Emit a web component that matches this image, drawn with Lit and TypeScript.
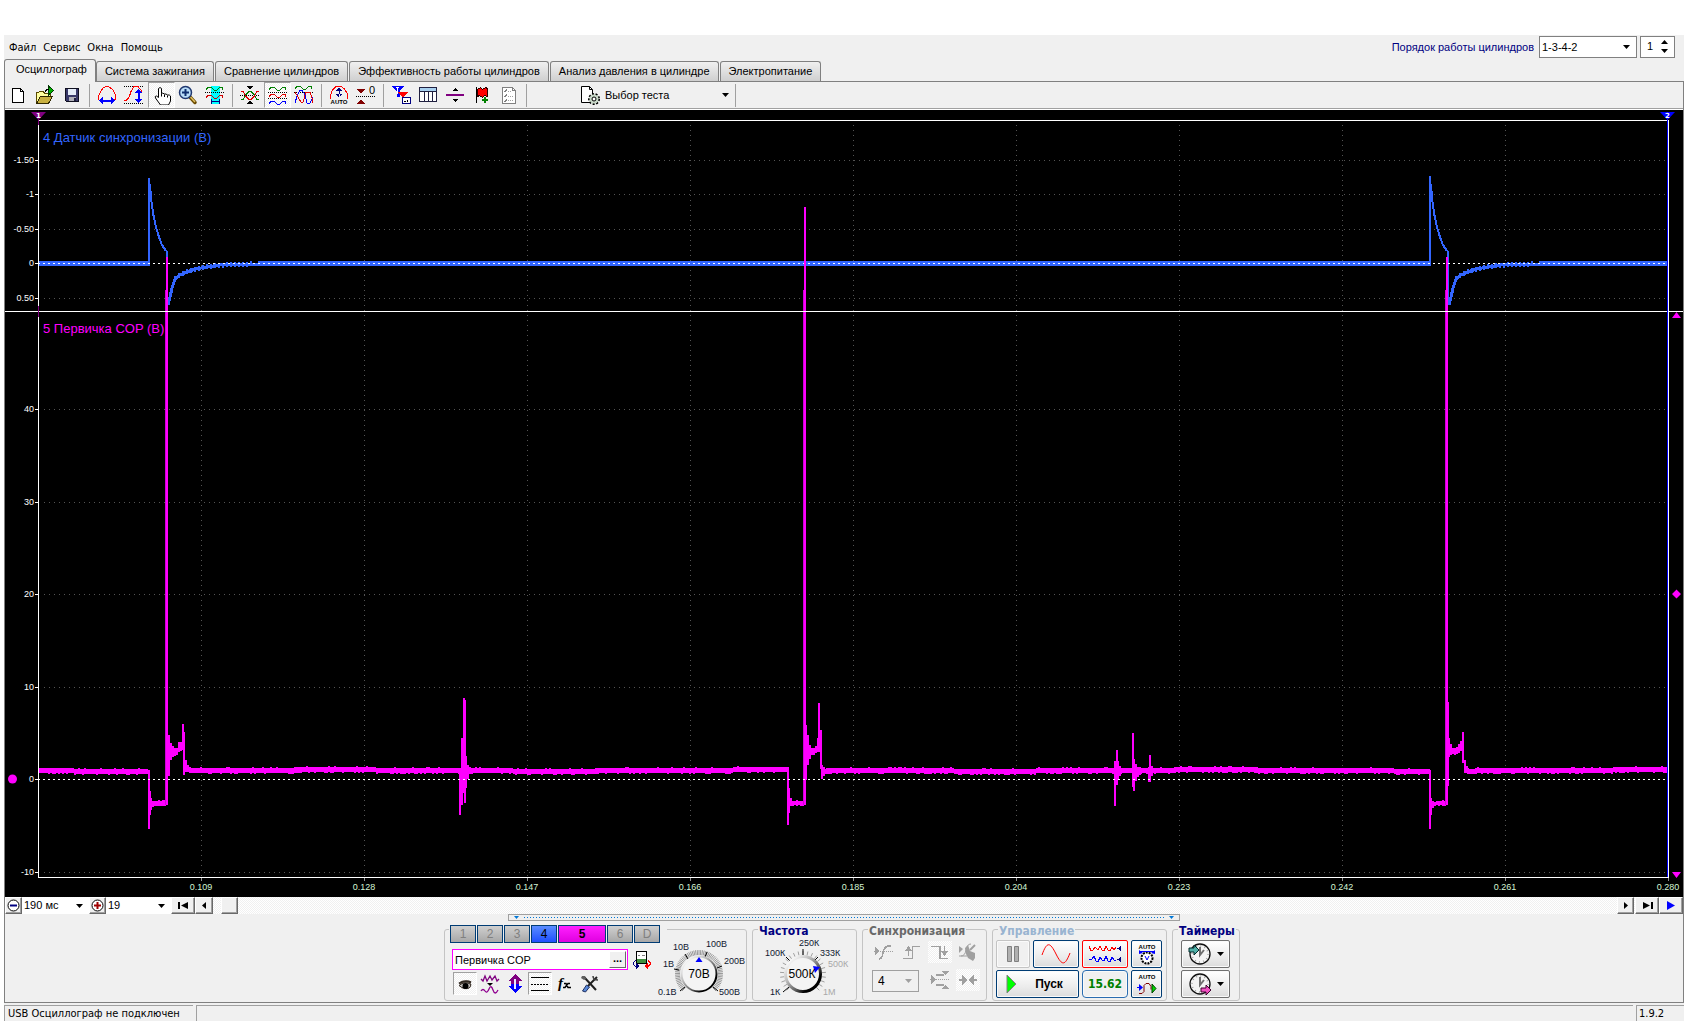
import { LitElement, html, svg, css } from "lit";
import { customElement } from "lit/decorators.js";
import { classMap } from "lit/directives/class-map.js";
import { styleMap } from "lit/directives/style-map.js";

/* ---------- plot data (in a 1678 x 787 drawing space) ---------- */

const W = 1678;
const H = 787;
const LEFT = 33;
const RIGHT = 1663;
const TOP = 10;
const SPLIT = 201;
const BOTTOM = 767;
const ZERO4 = 153;
const ZERO5 = 669;

const TIMES = ["0.109", "0.128", "0.147", "0.166", "0.185", "0.204", "0.223", "0.242", "0.261", "0.280"];
const LEVELS4: [string, number][] = [["-1.50", 50], ["-1", 84], ["-0.50", 119], ["0", 153], ["0.50", 188]];
const LEVELS5: [string, number][] = [["40", 299], ["30", 392], ["20", 484], ["10", 577], ["0", 669], ["-10", 762]];

/* vertical extents of a trace: x, top, bottom */
type Bar = [number, number, number];

const PULSES: Bar[] = [
  [144, 660, 719], [145, 681, 705], [146, 688, 700], [148, 691, 697], [150, 691, 696], [152, 691, 696],
  [154, 690, 696], [156, 691, 696], [158, 690, 696], [160, 690, 696],
  [164, 625, 666], [166, 633, 650], [168, 636, 647], [170, 638, 646], [172, 638, 645], [174, 632, 642],
  [176, 632, 641], [178, 614, 640], [179, 622, 665], [181, 650, 662], [183, 655, 662], [185, 657, 663],
  [455, 658, 705], [457, 628, 695], [459, 588, 683], [460, 590, 693], [461, 646, 678], [463, 655, 669], [465, 657, 664],
  [783, 658, 715], [784, 678, 703], [786, 688, 696], [788, 691, 696], [790, 691, 695], [792, 690, 696],
  [794, 691, 695], [796, 691, 696], [798, 691, 696],
  [801, 615, 670], [803, 625, 655], [805, 635, 649], [807, 638, 645], [809, 638, 645], [811, 636, 643],
  [813, 628, 642], [814, 593, 642], [816, 620, 659], [817, 655, 669], [819, 657, 666], [821, 659, 664],
  [1110, 651, 696], [1112, 640, 675], [1113, 651, 669], [1115, 656, 666],
  [1128, 623, 677], [1129, 649, 681], [1131, 654, 671], [1133, 657, 667], [1135, 657, 665],
  [1144, 658, 672], [1145, 645, 672], [1147, 656, 666],
  [1425, 660, 719], [1426, 688, 705], [1428, 691, 698], [1430, 692, 696], [1432, 691, 695], [1434, 691, 696],
  [1436, 691, 695], [1438, 690, 696], [1440, 691, 696],
  [1443, 592, 676], [1444, 628, 647], [1446, 634, 645], [1448, 638, 644], [1450, 638, 645], [1452, 637, 644],
  [1454, 634, 643], [1456, 631, 641], [1458, 622, 653], [1460, 650, 663], [1462, 656, 663],
];

/* quiet stretches between pulses, drawn with a fixed pseudo-random ripple */
const QUIET: [number, number][] = [[34, 143], [186, 455], [465, 783], [822, 1110], [1116, 1128], [1136, 1144], [1148, 1425], [1463, 1662]];

function quietPath(): string {
  let seed = 7;
  let d = "";
  for (const [from, to] of QUIET) {
    for (let x = from; x <= to; x += 2) {
      seed = (seed * 1103515245 + 12345) % 2147483648;
      const n = (seed >> 8) % 7;
      const drift = Math.round(Math.sin(x / 70) * 0.6);
      d += `M${x} ${658 + drift - (n === 1 ? 1 : 0)}V${663 + drift + (n === 2 || n === 3 ? 1 : 0)}`;
    }
  }
  return d;
}

const QUIET_PATH = quietPath();
const PULSE_PATH = PULSES.map(([x, a, b]) => `M${x} ${a}V${b}`).join("");

function decay(x: number): string {
  return `M${x + 1} 74L${x + 2} 88L${x + 4} 103L${x + 7} 117L${x + 10} 127L${x + 13} 135L${x + 17} 141`;
}
function recovery(x: number): string {
  return `M${x + 19} 195L${x + 21} 187L${x + 23} 178L${x + 26} 169L${x + 31} 165L${x + 38} 162L${x + 46} 159L${x + 58} 157L${x + 71} 155L${x + 101} 154H${x + 112}`;
}
function ripple(x: number): string {
  let d = "";
  for (let i = 26; i < 104; i += 4) {
    const y = 154 + Math.round(16 * Math.exp(-(i - 24) / 22));
    d += `M${x + i} ${y - 3}V${y + 2}`;
  }
  return d;
}

/* ---------- icons ---------- */

const wave = (y: number, a: number, c: string, x = 1) =>
  svg`<path d="M${x} ${y + a} l2 ${-a} h3 l3 ${a} h3 l3 ${-a} h2 l1 ${a}" fill="none" stroke=${c}/>`;
const dots = (y: number, c = "#000") => svg`<path d="M0 ${y}.5H20" stroke=${c} stroke-dasharray="1 1"/>`;

const ICONS: Record<string, unknown> = {
  new: svg`<path d="M4.500 3.500h8l3 3v11h-11z" fill="#fff" stroke="#000"/><path d="M12.500 3.500v3h3" fill="none" stroke="#000"/>`,
  open: svg`<path d="M1.500 17.500v-10h2l1-1h4l1 2h6v3" fill="#ffffa0" stroke="#5a4a00"/><path d="M1.500 18.500l4-7h12l-4 7z" fill="#c8b040" stroke="#302800"/><path d="M13.500 1v9l5-4.500z" fill="#00b000" stroke="#003800"/><path d="M10 7q1-3 4-3" fill="none" stroke="#000"/>`,
  save: svg`<path d="M3.500 3.500h13v13h-12l-1-1z" fill="#383868" stroke="#101020"/><path d="M6 4h8v6H6z" fill="#e4ecf8"/><path d="M7 12h7v4H7z" fill="#b0b0b8"/><path d="M12 13h2v3h-2z" fill="#202040"/>`,
  arch: svg`<path d="M1.500 14.500v-3l2-5 3-4 3-1h2l4 3 3 5v4l-1 2" fill="none" stroke="#f00"/><path d="M2 15.500l4-4v3h8v-3l4 4-4 4v-3H6v3z" fill="#00f"/>`,
  curve: svg`${dots(1)}${dots(18)}<path d="M0 15.500h2l3-3 2-6 3-5h4l4 5" fill="none" stroke="#f00"/><path d="M14.500 4l4 4h-3v6h3l-4 4-4-4h3V8h-3z" fill="#00f"/>`,
  hand: svg`<path d="M6.500 12.500V3.500q1.500-2 3 0v5q1-1 3 .5 1.500-.5 3 1 2-.5 3 1v5l-2 4h-8l-5-7q-1-2 1-2z" fill="#fff" stroke="#000"/><path d="M9.500 8.500v3M12.500 9.500v2.500M15.500 10.500v2" stroke="#000"/>`,
  zoom: svg`<path d="M12 12l5 5.500" stroke="#6a4a00" stroke-width="3.500" stroke-linecap="round"/><path d="M12.500 12l4.500 5" stroke="#e0c060" stroke-width="1.500"/><circle cx="7.500" cy="7.500" r="6" fill="#b8dcf8" stroke="#203870" stroke-width="1.500"/><path d="M4 7.500h7M7.500 4v7" stroke="#103070" stroke-width="2"/>`,
  cyan: svg`<path d="M6 1h9v18H6z" fill="#0ff"/>${wave(2, 3, "#008000")}${dots(7)}${wave(10, 3, "#d00000")}<path d="M6.500 14v5M14.500 14v5M6.500 16.500h8" stroke="#000080"/>`,
  cross: svg`<path d="M7 1h6l-3 3.500zM7 19h6l-3-3.500z" fill="#000"/>${dots(10)}<path d="M1 14.500h2l3-5 3-3h2l3 3 3 5h2" fill="none" stroke="#008000"/><path d="M1 6.500h2l3 5 3 3h2l3-3 3-5h2" fill="none" stroke="#e00000"/>`,
  waves: svg`${wave(2, 3, "#008000")}${dots(7)}${wave(9, 3, "#e00000")}${dots(13)}${wave(16, 3, "#00f")}`,
  waves2: svg`${wave(1, 3, "#008000")}${dots(7)}<path d="M1 18l2-7 3-6h2l3 5 2 8h3l3-6" fill="none" stroke="#00f"/><path d="M1 7l3 5 3 5h2l3-10h4l2 6v5" fill="none" stroke="#e00000"/>`,
  auto: svg`<path d="M1.500 14v-4l2-5 3-3 3-1h2l4 3 3 5v5" fill="none" stroke="#f00"/><path d="M10 2l3 4h-6zM10 13l3-4h-6zM9.500 4h1v8h-1z" fill="#000080"/><text x="10" y="19" text-anchor="middle" class="t6">AUTO</text>`,
  zero: svg`<path d="M1 4h8L5 9zM1 19h8l-4-5z" fill="#800000"/><path d="M0 11.500h20" stroke="#000" stroke-dasharray="1 1"/><text x="13" y="9" class="t10">0</text>`,
  funnel: svg`<path d="M0 1h13l-4 5v6H6V6z" fill="#00f"/><path d="M7 7h10l-4 4v6h-2v-5z" fill="#f00"/><path d="M5 2h3M6.500 2v7" stroke="#fff"/><path d="M11.500 12.500h8v6h-8z" fill="#fff" stroke="#000080"/><path d="M13 16.500h2M16 15v2" stroke="#000"/>`,
  table: svg`<path d="M1.500 2.500h17v14h-17z" fill="#fff" stroke="#202040"/><path d="M2 3h16v3H2z" fill="#a8d0f0"/><path d="M1 6.500h18M6.500 6v10M10.500 6v10M14.500 6v10" stroke="#202040"/>`,
  split: svg`<path d="M1 9h18v2H1z" fill="#800080"/><path d="M7 6h6l-3-3zM7 14h6l-3 3z" fill="#000"/>`,
  flag: svg`<path d="M4.500 2v16" stroke="#000"/><path d="M5.500 4.500l3-2 2 2 3-2 2 1v8l-3-1-2 2-3-2-2 1z" fill="#f00" stroke="#300000"/><path d="M10 15h6M13 12v6" stroke="#008000" stroke-width="2"/>`,
  list: svg`<path d="M3.500 2.500h10l3 3v13h-13z" fill="#fff" stroke="#808080"/><path d="M13.500 2.500v3h3" fill="none" stroke="#808080"/><path d="M5 6l1 1 2-3M5 11l1 1 2-3M5 16l1 1 2-3" fill="none" stroke="#808080"/><path d="M9 6.500h3M9 11.500h5M9 15.500h5" stroke="#a0a0a0" stroke-dasharray="1 1"/>`,
  test: svg`<path d="M1.500 1.500h8l3 3v13h-11z" fill="#fff" stroke="#000"/><path d="M9.500 1.500v3h3" fill="none" stroke="#000"/><circle cx="14" cy="14" r="5" fill="#c8d8c8" stroke="#000" stroke-width="2" stroke-dasharray="2 1.500"/><circle cx="14" cy="14" r="4.500" fill="#c8d8c8"/><circle cx="14" cy="14" r="2" fill="#fff" stroke="#000"/>`,
  /* channel panel */
  copy: svg`<path d="M4.500 1.500h10v12h-10z" fill="#fff" stroke="#000"/><path d="M5 9h9v4H5z" fill="#409040"/><path d="M6 5h2M10 5h3" stroke="#808080"/><path d="M3.500 10.500l-2 2v2l3 3" fill="none" stroke="#000080"/><path d="M4 13v6l4-3z" fill="#000080"/><path d="M16 10.500l2 2v2l-3 3" fill="none" stroke="#f00"/><path d="M16 13v6l-4-3z" fill="#f00"/>`,
  eye: svg`<path d="M5 8q5-3 11-1v6q-5 4-10 1z" fill="#b0a8a0"/><path d="M4 11.500q6-5 12-1-1 5-6 4-4-1-6-3z" fill="#c8c4c0" stroke="#302820"/><circle cx="10.500" cy="12" r="3" fill="#000"/><path d="M4 9.500q6-4 12-1" fill="none" stroke="#302820" stroke-width="2"/>`,
  noise: svg`<path d="M1 5l2 2 2-5 2 5 3-5 2 4 3-4 2 5 2-2" fill="none" stroke="#800080" stroke-width="1.300"/><path d="M7 9h6l-3 3z" fill="#000"/><path d="M1 17q2-3 4 0t4-2 4 1 5 0" fill="none" stroke="#900090" stroke-width="1.300"/>`,
  updown: svg`<path d="M10 0l7 7h-3v3H6V7H3z" fill="#800080"/><path d="M10 19l7-7h-3v-2H6v2H3z" fill="#00f"/><path d="M10 5v10" stroke="#e8e8ff" stroke-width="2"/>`,
  lines: svg`<path d="M1 3.500h18M1 16.500h18" stroke="#000"/><path d="M1 10.500h18" stroke="#000" stroke-dasharray="2 1"/>`,
  fx: svg`<text x="3" y="14" class="fx">f</text><path d="M9 9.500h2l2 4h3M15 9.500h-2l-3 4H8" fill="none" stroke="#000" stroke-width="1.500"/>`,
  tools: svg`<path d="M4 3l12 13" stroke="#202020" stroke-width="2"/><path d="M2 2l3 0 1 3-2 1-3-2z" fill="#606060"/><path d="M17 3L8 12" stroke="#202020" stroke-width="2"/><path d="M13 2q0 4 5 4" fill="none" stroke="#404040" stroke-width="1.500"/><path d="M2.500 17l4-6 3 2-4 5z" fill="#5888d8" stroke="#203060"/>`,
  /* synchronisation */
  s1: svg`<path d="M1 5l5 4-5 4z" fill="#a0a0a0"/>${dots(9, "#a0a0a0")}<path d="M5 17q3 0 4-6t5-7h3" fill="none" stroke="#a0a0a0" stroke-width="1.500"/>`,
  s2: svg`<path d="M1 16.500h9.500v-12H18M6.500 6v8" fill="none" stroke="#a0a0a0" stroke-width="1.500"/><path d="M3 9h7L6.500 4z" fill="#a0a0a0"/>`,
  s3: svg`<path d="M1 4.500h9v12h8" fill="none" stroke="#a0a0a0" stroke-width="1.500"/><path d="M14.500 4v6" stroke="#a0a0a0" stroke-width="1.500"/><path d="M11 9h7l-3.500 5z" fill="#a0a0a0"/>`,
  s4: svg`<path d="M1 4l4 3-4 4z" fill="#a0a0a0"/><path d="M3 14q4 0 5-6t5-6M1 14h8" fill="none" stroke="#a0a0a0"/><path d="M7 6l3-3 2 6 5 2v5l-2 3-5-3-2-4z" fill="#a0a0a0"/><path d="M12 8l5-5" stroke="#a0a0a0" stroke-width="2"/>`,
  s5: svg`<path d="M1 5l5 4.500L1 14z" fill="#a0a0a0"/>${dots(9, "#a0a0a0")}<path d="M6 5h8M6 15h8" stroke="#a0a0a0" stroke-width="2"/><path d="M12 1h7l-3.500 4zM12 19h7l-3.500-4z" fill="#a0a0a0"/>`,
  s6: svg`<path d="M1 9h3V5l6 5-6 5v-4H1zM19 9h-3V5l-6 5 6 5v-4h3z" fill="#a0a0a0"/>`,
};
const SMOOTH = new Set(["eye", "tools", "zoom", "fx", "noise", "hand", "test", "s4"]);

const icon = (name: string) =>
  html`<svg class=${classMap({ icon: true, crisp: !SMOOTH.has(name) })} viewBox="0 0 20 20" aria-hidden="true">${ICONS[name]}</svg>`;
const caret = (cls = "") =>
  html`<svg class="caret ${cls}" viewBox="0 0 7 4" aria-hidden="true"><path d="M0 0h7L3.500 4z" fill="currentColor"/></svg>`;

const knobDefs = (id: string) => svg`<defs>
  <linearGradient id=${id} x1="0.1" y1="0.1" x2="0.9" y2="0.9">
    <stop offset="0" stop-color="#ffffff"/><stop offset="0.35" stop-color="#b8b8b8"/>
    <stop offset="0.65" stop-color="#606060"/><stop offset="0.85" stop-color="#000"/>
  </linearGradient></defs>`;

/* tick marks on a 270 degree scale around a knob */
function ticks(cx: number, cy: number, r1: number, r2: number, n: number, colour: string) {
  let d = "";
  for (let i = 0; i <= n; i++) {
    const a = ((135 + (270 * i) / n) * Math.PI) / 180;
    d += `M${cx + r1 * Math.cos(a)} ${cy + r1 * Math.sin(a)}L${cx + r2 * Math.cos(a)} ${cy + r2 * Math.sin(a)}`;
  }
  return svg`<path d=${d} stroke=${colour} stroke-width="1"/>`;
}

const TOOLS: [string, string][][] = [
  [["new", "Новый"], ["open", "Открыть"], ["save", "Сохранить"]],
  [["arch", "Ширина"], ["curve", "Высота"], ["hand", "Рука"], ["zoom", "Увеличить"], ["cyan", "Интервал"]],
  [["cross", "Совместить"], ["waves", "Разделить"], ["waves2", "Наложить"]],
  [["auto", "Авто"], ["zero", "Ноль"]],
  [["funnel", "Фильтр"], ["table", "Таблица"], ["split", "Разделитель"], ["flag", "Метка"], ["list", "Список"]],
];
const PRESSED = new Set(["hand", "waves", "eye", "lines"]);

/* ---------- oscilloscope screen ---------- */

@customElement("scope-screen")
export class ScopeScreen extends LitElement {
  static styles = css`
    :host { display: block; position: relative; background: #000; overflow: hidden; min-height: 300px; }
    .plot { position: absolute; inset: 0; width: 100%; height: 100%; }
    .label { position: absolute; font: 9px/12px "Liberation Sans", Arial, sans-serif; color: #fff; white-space: nowrap; }
    .level { transform: translateY(-50%); width: 29px; text-align: right; left: 0; }
    .time { transform: translateX(-50%); color: #d4f4d4; }
    .title { font-size: 13px; line-height: 16px; }
    .blue { color: #3366ff; }
    .pink { color: #f0f; }
    .num { font: bold 7px "DejaVu Sans", sans-serif; fill: #fff; }
  `;

  render() {
    const cols = TIMES.map((_, i) => LEFT + 163 * (i + 1));
    const px = (v: number, full: number) => `${(v / full) * 100}%`;
    return html`
      <svg class="plot" viewBox="0 0 ${W} ${H}" preserveAspectRatio="none" aria-hidden="true">
        <g shape-rendering="crispEdges" fill="none">
          <g stroke="#545454" stroke-dasharray="1 4">
            ${cols.slice(0, -1).map((x) => svg`<path d="M${x}.5 15V${BOTTOM}"/>`)}
            ${[...LEVELS4, ...LEVELS5].filter(([t]) => t !== "0").map(([, y]) => svg`<path d="M${LEFT + 6} ${y}.5H${RIGHT}"/>`)}
          </g>
          <g stroke="#3366ff">
            <path stroke-width="5" d="M33 153.500H144M253 153.500H1424M1534 153.500H1663"/>
            <path stroke-width="2" d="M144 156V68M1425 156V66"/>
            ${[144, 1425].map((x) => svg`<path stroke-width="2" d="${decay(x)}"/><path stroke-width="3" d="${recovery(x)}"/><path stroke-width="2" d="${ripple(x)}"/>`)}
            <path stroke-width="2" d="M162 141V195M1443 141V195"/>
          </g>
          <path stroke="#fff" stroke-dasharray="2 3" d="M${LEFT} ${ZERO4}.5H${RIGHT}"/>
          <g stroke="#f0f">
            <path stroke-width="2" d=${QUIET_PATH}/>
            <path stroke-width="2" d=${PULSE_PATH}/>
            <path stroke-width="3" stroke="#d000d8" d="M161.500 180V695M799.500 180V695M1441.500 180V695"/>
            <path stroke-width="2" d="M162 147V695M800 97V695M1442 147V695"/>
          </g>
          <path stroke="#fff" stroke-dasharray="2 3" d="M${LEFT} ${ZERO5}.5H${RIGHT}"/>
          <path stroke="#fff" d="M${LEFT} ${TOP}.5H${RIGHT}M0 ${SPLIT}.5H${W}M${LEFT} ${BOTTOM}.5H${RIGHT}M${LEFT}.5 ${TOP}V${BOTTOM}M${RIGHT}.5 ${TOP}V${BOTTOM + 1}"/>
          <path stroke="#00f" d="M1662.500 9V${BOTTOM}"/>
          <path stroke="#800080" d="M33.500 9V15M33.500 196V207"/>
          ${[...LEVELS4, ...LEVELS5].map(([, y]) => svg`<path stroke="#fff" d="M30 ${y}.5H33"/>`)}
          ${cols.map((x) => svg`<path stroke="#909090" d="M${x}.5 ${BOTTOM + 1}v3"/>`)}
        </g>
        <path d="M26 2h15l-7.500 8z" fill="#800080"/>
        <path d="M1655 2h15l-7.500 8z" fill="#00f"/>
        <text class="num" x="31" y="8">1</text><text class="num" x="1660" y="8">2</text>
        <g fill="#f0f">
          <circle cx="7.500" cy="669" r="4.500"/>
          <path d="M1667 208h9l-4.500-6zM1667 762h9l-4.500 6zM1671.500 479.500l4.500 4.500-4.500 4.500-4.500-4.500z"/>
        </g>
      </svg>
      ${[...LEVELS4, ...LEVELS5].map(([t, y]) => html`<span class="label level" style=${styleMap({ top: px(y, H) })}>${t}</span>`)}
      ${TIMES.map((t, i) => html`<span class="label time" style=${styleMap({ left: px(cols[i], W), top: px(771, H) })}>${t}</span>`)}
      <span class="label title blue" style=${styleMap({ left: px(38, W), top: px(20, H) })}>4 Датчик синхронизации (В)</span>
      <span class="label title pink" style=${styleMap({ left: px(38, W), top: px(211, H) })}>5 Первичка COP (В)</span>
    `;
  }
}

/* ---------- application ---------- */

@customElement("app-root")
export class AppRoot extends LitElement {
  static styles = css`
    :host { display: flex; box-sizing: border-box; min-height: 100vh; padding: 35px 12px 5px 4px; background: #fff; color: #000;
      font: 11px/14px "Liberation Sans", Arial, sans-serif; }
    * { box-sizing: border-box; }
    button, select, input { font: inherit; color: inherit; margin: 0; padding: 0; border: 0; border-radius: 0; background: none; }
    select { appearance: none; }
    .window { flex: 1; min-width: 0; display: flex; flex-direction: column; background: #f0f0f0; }
    .icon { width: 20px; height: 20px; display: block; }
    .crisp { shape-rendering: crispEdges; }
    .t6 { font: bold 6px "Liberation Sans", sans-serif; }
    .t10 { font: 11px "Liberation Sans", sans-serif; }
    .fx { font: italic bold 15px "Liberation Serif", serif; }
    .caret { width: 7px; height: 4px; display: block; }

    .top { display: flex; align-items: center; height: 24px; padding: 0 9px 0 5px; }
    .menu { display: flex; gap: 7px; flex: 1; padding-top: 2px; font: 11px/14px "DejaVu Sans Condensed", "DejaVu Sans", sans-serif; }
    .menu a { color: inherit; text-decoration: none; }
    .order { color: #000080; margin-right: 5px; }
    .combo { position: relative; display: flex; align-items: center; background: #fff; }
    .combo select { flex: 1; width: 100%; height: 100%; padding: 0 0 1px 2px; }
    .combo .caret { position: absolute; right: 6px; pointer-events: none; }
    .boxed { border: 1px solid #808080; height: 22px; }
    .w-order { width: 98px; margin-right: 3px; }
    .spin { width: 35px; display: flex; align-items: center; justify-content: space-between; background: #fff; padding: 0 6px 2px 6px; }
    .spin input { width: 12px; }
    .arrows { display: flex; flex-direction: column; gap: 5px; }
    .arrows button { display: block; height: 4px; }
    .flip { transform: rotate(180deg); }

    .tabs { display: flex; align-items: flex-end; height: 22px; gap: 1px; }
    .tab { height: 20px; padding: 0 8px 2px; border: 1px solid #808080; border-bottom: 0; border-radius: 3px 3px 0 0;
      background: linear-gradient(#f0f0f0, #cfcfcf); white-space: nowrap; font-size: 11px; }
    .tab.active { position: relative; height: 23px; padding: 0 8px 4px 11px; margin: 0 -1px -1px 0; background: #f0f0f0; }

    .body { flex: 1; display: flex; flex-direction: column; border: 1px solid #808080; }
    .toolbar { display: flex; align-items: center; height: 27px; border-bottom: 1px solid #a0a0a0; }
    .tool { width: 27px; height: 26px; padding-right: 2px; display: flex; align-items: center; justify-content: center; }
    .pressed { padding: 0; background: repeating-conic-gradient(#fff 0 25%, #f0f0f0 0 50%) 0 0 / 2px 2px; border: 1px solid; border-color: #a0a0a0 #fff #fff #a0a0a0; }
    .sep { width: 8px; height: 23px; background: linear-gradient(#a0a0a0, #a0a0a0) 3px 0 / 1px 100% no-repeat; }
    .choice { display: flex; align-items: center; width: 201px; height: 26px; padding: 0 3px 0 49px; gap: 5px; text-align: left; }
    .choice span { flex: 1; }
    scope-screen { flex: 1; border-top: 1px solid #fff; }

    .scroll { display: flex; height: 17px; background: repeating-conic-gradient(#fff 0 25%, #f0f0f0 0 50%) 0 0 / 2px 2px; }
    .sb { height: 17px; display: flex; align-items: center; justify-content: center; background: #f0f0f0; border: 1px solid; border-color: #fff #696969 #696969 #fff; box-shadow: inset -1px -1px #a0a0a0; }
    .sb svg { height: 15px; display: block; }
    .w17 { width: 17px; } .w18 { width: 18px; } .w24 { width: 24px; }
    .thumb { margin-left: 8px; }
    .apart { margin-right: 1px; }
    .fill { flex: 1; }
    .scale { width: 67px; } .zoomed { width: 65px; }

    .splitter { align-self: center; display: flex; align-items: center; gap: 5px; width: 40%; height: 7px; border: 1px solid #a0a0a0; padding: 0 5px; color: #0078d7; }
    .splitter .caret { width: 5px; height: 3px; }
    .dotline { flex: 1; height: 1px; background: repeating-linear-gradient(90deg, #0078d7 0 1px, transparent 1px 3px); }
    .panel { display: flex; justify-content: center; gap: 5px; padding: 8px 4px 1px 0; }
    .group { height: 72px; border: 1px solid #c4c4c4; border-radius: 3px; display: flex; flex-direction: column; align-items: flex-start; }
    .title { font: bold 12px/14px "DejaVu Sans Condensed", "DejaVu Sans", sans-serif; height: 14px; margin: -6px 0 0 5px; padding: 0 1px; background: #f0f0f0; color: #000080; white-space: nowrap; }
    .off { color: #696969; } .pale { color: #99b4d1; }

    .channels { width: 303px; flex-direction: row; }
    .chan { width: 207px; display: flex; flex-direction: column; padding-left: 4px; }
    .keys { display: flex; gap: 1px; width: 218px; margin-top: -5px; padding-left: 1px; background: #f0f0f0; position: relative; }
    .key { width: 26px; height: 18px; border: 1px solid #003c74; background: linear-gradient(#d0d0d0, #a8a8a8); color: #808080; font-size: 12px; }
    .key.k4 { background: linear-gradient(#5a8cff, #2050ff); color: #000; }
    .key.k5 { width: 48px; background: linear-gradient(#ff20ff, #e000e0); color: #000; font-weight: bold; }
    .namerow { display: flex; align-items: center; gap: 4px; margin-top: 6px; padding-left: 3px; height: 21px; }
    .name { display: flex; width: 177px; height: 21px; border: 1px solid #f0f; background: #fff; padding: 1px; }
    .name input { flex: 1; min-width: 0; padding-left: 1px; }
    .more { width: 17px; height: 17px; background: #f0f0f0; border: 1px solid; border-color: #fff #696969 #696969 #fff; line-height: 8px; padding-bottom: 4px; font-weight: bold; }
    .bare { display: block; }
    .iconrow { display: flex; margin-top: 2px; padding-left: 4px; gap: 1px; }
    .small { width: 24px; height: 23px; display: flex; align-items: center; justify-content: center; }
    .dial { display: block; }
    .lab { font: 9px "Liberation Sans", Arial, sans-serif; fill: #101830; }
    .dim { fill: #a8a8a8; }
    .val { font: 12px "Liberation Sans Narrow", "Liberation Sans", Arial, sans-serif; text-anchor: middle; }

    .freq { width: 105px; }
    .freq .dial { margin-top: -8px; position: relative; }
    .sync { width: 125px; }
    .syncrow { display: flex; gap: 4px; padding-left: 9px; margin-top: 6px; }
    .title + .syncrow { margin-top: 3px; }
    .syncrow .small { height: 22px; }
    .lit { background: repeating-conic-gradient(#fff 0 25%, #f0f0f0 0 50%) 0 0 / 2px 2px; }
    .source { width: 47px; height: 22px; margin: 1px 5px 0 0; border: 1px solid #a0a0a0; background: #f0f0f0; }
    .source select { padding-left: 5px; font-size: 12px; }
    .source .caret { color: #a0a0a0; }

    .control { width: 175px; }
    .grid { display: grid; grid-template-columns: 34px 46px 46px 31px; gap: 2px 3px; margin: 2px 0 0 3px; }
    .cmd { height: 28px; border: 1px solid #003c74; border-radius: 2px; background: linear-gradient(#fff, #ececec 60%, #dcdcdc);
      box-shadow: inset 0 0 0 1px #fafafa; display: flex; align-items: center; justify-content: center; }
    .cmd svg { display: block; }
    .grey { border-color: #c4c4c4; background: #f0f0f0; }
    .red { border-color: #f00; }
    .start { grid-column: span 2; font: bold 12px/14px "Liberation Sans", sans-serif; gap: 18px; padding-right: 6px; }
    .volts { color: #008000; font: bold 12px/14px "DejaVu Sans Condensed", "DejaVu Sans", sans-serif; border: 1px solid #2a6cb0; border-radius: 4px; background: #f0f0f0; }
    .timers { width: 68px; }
    .stack { display: flex; flex-direction: column; gap: 2px; margin: 2px 0 0 8px; }
    .timer { width: 49px; border-color: #707070; gap: 5px; }

    .status { display: flex; gap: 3px; margin-top: 2px; height: 16px; font: 11px/15px "DejaVu Sans Condensed", "DejaVu Sans", sans-serif; }
    .cell { border: 1px solid #a0a0a0; border-width: 1px 0 0 1px; padding-left: 3px; white-space: nowrap; }
    .c1 { width: 189px; } .c3 { width: 48px; padding-left: 2px; }
  `;

  private tool(name: string, label: string, cls = "tool") {
    return html`<button class=${classMap({ [cls]: true, pressed: PRESSED.has(name) })} aria-label=${label}>${icon(name)}</button>`;
  }

  private clock(arrow: unknown) {
    return html`<svg width="24" height="24" viewBox="0 0 24 24" aria-hidden="true">
      <circle cx="12" cy="12" r="10" fill="#f4f4f4" stroke="#101010" stroke-width="1.300"/>
      <circle cx="12" cy="12" r="8" fill="none" stroke="#a0a0a0" stroke-width="1.500" stroke-dasharray="1 3.190"/>
      <path d="M12 5v8l4-5" fill="none" stroke="#707070" stroke-width="2"/>${arrow}</svg>`;
  }

  private scrollButton(label: string, cls: string, d: string, colour = "#000") {
    return html`<button class="sb ${cls}" aria-label=${label}><svg width="15" viewBox="0 0 15 15"><path d=${d} fill=${colour}/></svg></button>`;
  }

  render() {
    return html`
      <main class="window">
        <header class="top">
          <nav class="menu">${["Файл", "Сервис", "Окна", "Помощь"].map((t) => html`<a href="#">${t}</a>`)}</nav>
          <label class="order" for="order">Порядок работы цилиндров</label>
          <div class="combo boxed w-order"><select id="order"><option>1-3-4-2</option></select>${caret()}</div>
          <div class="spin boxed"><input aria-label="Цилиндр" value="1" />
            <span class="arrows"><button aria-label="Больше">${caret("flip")}</button><button aria-label="Меньше">${caret()}</button></span></div>
        </header>
        <nav class="tabs" role="tablist">
          ${["Осциллограф", "Система зажигания", "Сравнение цилиндров", "Эффективность работы цилиндров", "Анализ давления в цилиндре", "Электропитание"].map(
            (t, i) => html`<button role="tab" aria-selected=${i === 0 ? "true" : "false"} class=${classMap({ tab: true, active: i === 0 })}>${t}</button>`
          )}
        </nav>
        <section class="body">
          <div class="toolbar">
            ${TOOLS.map((g) => html`${g.map(([n, l]) => this.tool(n, l))}<i class="sep"></i>`)}
            <button class="choice">${icon("test")}<span>Выбор теста</span>${caret()}</button><i class="sep"></i>
          </div>
          <scope-screen></scope-screen>
          <div class="scroll">
            <button class="sb w17" aria-label="Сжать"><svg width="15" viewBox="0 0 15 15"><circle cx="7.500" cy="7.500" r="5.500" fill="#fff" stroke="#000"/><path d="M4 6.500h7v2H4z" fill="#000080"/></svg></button>
            <div class="combo scale"><select aria-label="Развёртка"><option>190 мс</option></select>${caret()}</div>
            <button class="sb w17" aria-label="Растянуть"><svg width="15" viewBox="0 0 15 15"><circle cx="7.500" cy="7.500" r="5.500" fill="#fff" stroke="#000"/><path d="M4 6.500h7v2H4zM6.500 4h2v7h-2z" fill="#a00000"/></svg></button>
            <div class="combo zoomed"><select aria-label="Масштаб"><option>19</option></select>${caret()}</div>
            ${this.scrollButton("В начало", "w24", "M2 4h2v7H2zM12 4v7L5 7.500z")}
            ${this.scrollButton("Назад", "w18", "M9 4v7L5 7.500z")}
            <button class="sb w17 thumb" aria-label="Ползунок"></button>
            <span class="fill"></span>
            ${this.scrollButton("Вперёд", "w17 apart", "M6 4v7l4-3.500z")}
            ${this.scrollButton("В конец", "w24", "M3 4v7l7-3.500zM11 4h2v7h-2z")}
            ${this.scrollButton("Пуск", "w24", "M3 3v9l8-4.500z", "#00f")}
          </div>
          <div class="splitter">${caret()}<i class="dotline"></i>${caret()}</div>
          <div class="panel">${this.channels()}${this.frequency()}${this.sync()}${this.control()}${this.timers()}</div>
        </section>
        <footer class="status">
          <span class="cell c1">USB Осциллограф не подключен</span><span class="cell fill"></span><span class="cell c3">1.9.2</span>
        </footer>
      </main>
    `;
  }

  private channels() {
    return html`<div class="group channels" role="group" aria-label="Канал">
      <div class="chan">
        <div class="keys">${["1", "2", "3", "4", "5", "6", "D"].map((k) => html`<button class=${classMap({ key: true, k4: k === "4", k5: k === "5" })}>${k}</button>`)}</div>
        <div class="namerow">
          <div class="name"><input aria-label="Название канала" value="Первичка COP" /><button class="more" aria-label="Выбрать">...</button></div>
          <button class="bare" aria-label="Копировать">${icon("copy")}</button>
        </div>
        <div class="iconrow">
          ${[["eye", "Показать"], ["noise", "Фильтр"], ["updown", "Инверсия"], ["lines", "Уровни"], ["fx", "Функция"], ["tools", "Настройка"]].map(([n, l]) => this.tool(n, l, "small"))}
        </div>
      </div>
      <svg class="dial" width="94" height="68" viewBox="0 0 94 68" role="img" aria-label="70В">
        ${knobDefs("k1")}${ticks(47, 44, 19, 24, 64, "#989898")}
        <path d="M33 57l-5 4M27 40l-5-1M36 29l-3-5M53 27l2-5M65 38l5-2M61 57l5 4" stroke="#000"/>
        <circle cx="47" cy="44" r="17.500" fill="#f4f4f4" stroke="url(#k1)" stroke-width="2"/>
        <path d="M47 27l3.500 5h-7z" fill="#00f"/>
        <text class="val" x="47" y="48">70В</text>
        <text class="lab" x="6" y="65">0.1В</text><text class="lab" x="11" y="37">1В</text><text class="lab" x="21" y="20">10В</text>
        <text class="lab" x="54" y="17">100В</text><text class="lab" x="72" y="34">200В</text><text class="lab" x="67" y="65">500В</text>
      </svg>
    </div>`;
  }

  private frequency() {
    return html`<div class="group freq" role="group" aria-label="Частота">
      <div class="title">Частота</div>
      <svg class="dial" width="102" height="68" viewBox="0 0 102 68" role="img" aria-label="500К">
        ${knobDefs("k2")}${ticks(50, 44, 19, 23, 22, "#a0a0a0")}
        <path d="M36 57l-6 5M37 31l-4-4M50 25v-6M61 31l4-4" stroke="#000"/>
        <circle cx="50" cy="44" r="17.500" fill="#f4f4f4" stroke="url(#k2)" stroke-width="3"/>
        <path d="M60 36l7 1-5 6z" fill="#00f"/>
        <text class="val" x="49" y="48">500К</text>
        <text class="lab" x="17" y="65">1К</text><text class="lab" x="12" y="26">100К</text><text class="lab" x="46" y="16">250К</text>
        <text class="lab" x="67" y="26">333К</text><text class="lab dim" x="75" y="37">500К</text><text class="lab dim" x="70" y="65">1М</text>
      </svg>
    </div>`;
  }

  private sync() {
    const b = (n: string, lit = false) => html`<button class=${classMap({ small: true, lit })} aria-label="Синхронизация">${icon(n)}</button>`;
    return html`<div class="group sync" role="group" aria-label="Синхронизация">
      <div class="title off">Синхронизация</div>
      <div class="syncrow">${b("s1")}${b("s2")}${b("s3", true)}${b("s4")}</div>
      <div class="syncrow">
        <div class="combo source"><select aria-label="Канал синхронизации"><option>4</option></select>${caret()}</div>
        ${b("s5")}${b("s6", true)}
      </div>
    </div>`;
  }

  private control() {
    return html`<div class="group control" role="group" aria-label="Управление">
      <div class="title pale">Управление</div>
      <div class="grid">
        <button class="cmd grey" aria-label="Пауза"><svg width="12" height="16"><path d="M.5.500h4v15h-4zM7.500.500h4v15h-4z" fill="#b0b0b0" stroke="#808080"/></svg></button>
        <button class="cmd" aria-label="Синус"><svg width="30" height="22"><path d="M1 12C6-2 9-1 15 11s9 12 14-1" fill="none" stroke="#f00"/></svg></button>
        <button class="cmd red" aria-label="Запись">
          <svg class="crisp" width="34" height="20"><path d="M1 2l2 5 2-1 2-3 3 3 2-4 2 4 2 1 2-5 2 4 2 1 2-4 2 3 2-3" fill="none" stroke="#f00"/>
            <path d="M1 15h3l2-3 2 5 2 1 2-5 2 3 2 1 2-5 2 5 2 1 2-5 2 3h2" fill="none" stroke="#00f"/><path d="M33 2v5l-4-2.500zM33 13v5l-4-2.500z" fill="#000080"/></svg>
        </button>
        <button class="cmd" aria-label="Авто чувствительность">
          <svg width="20" height="24"><text x="10" y="7" text-anchor="middle" class="t6">AUTO</text><circle cx="10" cy="16" r="5.500" fill="#fff" stroke="#000" stroke-width="2" stroke-dasharray="2 1"/>
            <path d="M3 9.500h14" stroke="#00f"/><path d="M2 12V8l4 3zM18 12V8l-4 3z" fill="#00f"/><path d="M8 14l2 4 2-4" fill="none" stroke="#00f"/></svg>
        </button>
        <button class="cmd start"><svg width="11" height="20"><path d="M1 1v18l9-9z" fill="#0f0" stroke="#808080"/></svg><span>Пуск</span></button>
        <button class="cmd volts">15.62</button>
        <button class="cmd" aria-label="Авто синхронизация">
          <svg width="20" height="24"><text x="10" y="7" text-anchor="middle" class="t6">AUTO</text><path d="M2 12v7l4-3.500z" fill="#00f"/><path d="M0 15.500h3" stroke="#00f"/>
            <path d="M2 21.500h3l2-2v-6l2-2h3l2 3v3" fill="none" stroke="#800000"/><path d="M15 12v9l4-4.500z" fill="#0d0" stroke="#004000"/></svg>
        </button>
      </div>
    </div>`;
  }

  private timers() {
    return html`<div class="group timers" role="group" aria-label="Таймеры">
      <div class="title">Таймеры</div>
      <div class="stack">
        <button class="cmd timer" aria-label="Таймер пуска">${this.clock(svg`<path d="M1 6h5V3l5 5-5 5v-3H1z" fill="#50b0a8" stroke="#002828"/>`)}${caret()}</button>
        <button class="cmd timer" aria-label="Таймер останова">${this.clock(svg`<path d="M13 16h5v-3l5 5-5 5v-3h-5z" fill="#f050c0" stroke="#400030"/>`)}${caret()}</button>
      </div>
    </div>`;
  }
}
